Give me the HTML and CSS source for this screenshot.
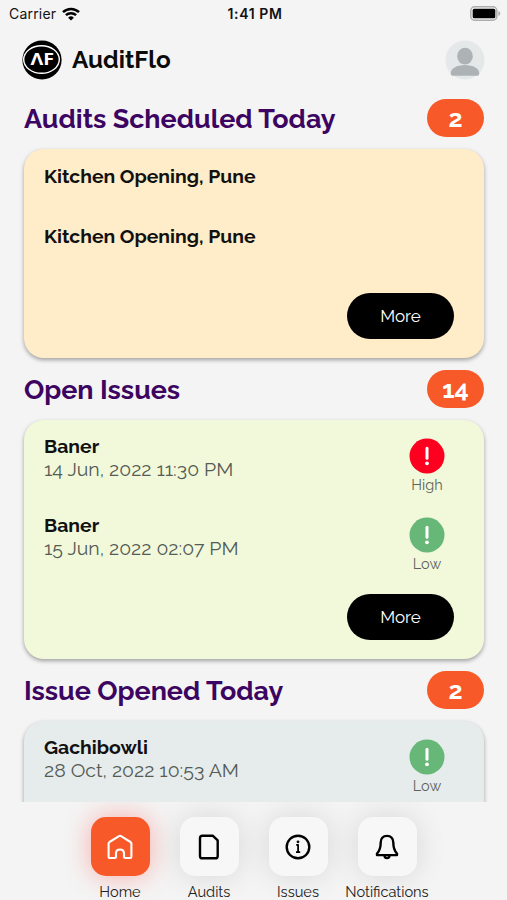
FILE: index.html
```
<!DOCTYPE html>
<html lang="en">
<head>
    <meta charset="UTF-8">
    <meta name="viewport" content="width=device-width, initial-scale=1.0">
    <title>AuditFlo</title>
    <link rel="stylesheet" href="styles.css">
</head>
<body>

    <div class="status-bar">
        <div class="carrier">
            <span>Carrier</span>
            <svg width="18" height="14" viewBox="0 0 18 14" fill="none" stroke="#000" stroke-width="2.5">
                <path d="M1 5.2a11.6 11.6 0 0 1 16 0"/>
                <path d="M3.9 8.2a7.4 7.4 0 0 1 10.2 0"/>
                <path d="M9 13.6L6.1 10.7a4.1 4.1 0 0 1 5.8 0z" fill="#000" stroke="none"/>
            </svg>
        </div>
        <div class="clock">1:41 PM</div>
        <svg class="battery" width="31" height="15" viewBox="0 0 31 15">
            <rect x=".8" y=".8" width="26" height="13.4" rx="3.8" fill="#f4f4f4" stroke="#adadad" stroke-width="1.5"/>
            <rect x="2.7" y="2.7" width="22.6" height="9.6" rx="1.5" fill="#000"/>
            <path d="M28.4 5v5c1.1-.4 1.9-1.3 1.9-2.5S29.5 5.4 28.4 5z" fill="#adadad"/>
        </svg>
    </div>

    <header class="header">
        <svg width="40" height="40" viewBox="0 0 40 40">
            <circle cx="20" cy="20" r="19.6" fill="#000"/>
            <ellipse cx="19.5" cy="19.5" rx="17.8" ry="13.8" fill="none" stroke="#fff" stroke-width="1.4"/>
            <text class="logo-text" x="20.3" y="25.2" text-anchor="middle" textLength="23.5" lengthAdjust="spacingAndGlyphs">ΛF</text>
        </svg>
        <h1>AuditFlo</h1>
        <svg class="avatar" width="40" height="40" viewBox="0 0 40 40">
            <circle cx="20" cy="20" r="19.5" fill="#e4e8e9"/>
            <ellipse cx="20" cy="16.2" rx="7.8" ry="8.4" fill="#adb3b5"/>
            <path d="M5.7 33.5c0-5 6-8.5 14.3-8.5s14.3 3.5 14.3 8.5c0 1.5-1 2.300-2.500 2.300H8.200c-1.500 0-2.500-.8-2.500-2.300z" fill="#adb3b5"/>
        </svg>
    </header>

    <main class="content">
        <div class="section-title">
            <h2>Audits Scheduled Today</h2>
            <span class="count">2</span>
        </div>
        <section class="card card-audits">
            <div class="audit">Kitchen Opening, Pune</div>
            <div class="audit">Kitchen Opening, Pune</div>
            <button class="more">More</button>
        </section>

        <div class="section-title">
            <h2>Open Issues</h2>
            <span class="count">14</span>
        </div>
        <section class="card card-open">
            <div class="issue">
                <div>
                    <div class="place">Baner</div>
                    <div class="date">14 Jun, 2022 11:30 PM</div>
                </div>
                <div class="priority">
                    <svg width="36" height="36" viewBox="0 0 36 36">
                        <circle cx="18" cy="18" r="17.5" fill="#fd0020"/>
                        <path d="M18 10.3v9.9" stroke="#fff" stroke-width="3" stroke-linecap="round"/>
                        <circle cx="18" cy="25.3" r="1.9" fill="#fff"/>
                    </svg>
                    <span>High</span>
                </div>
            </div>
            <div class="issue">
                <div>
                    <div class="place">Baner</div>
                    <div class="date">15 Jun, 2022 02:07 PM</div>
                </div>
                <div class="priority">
                    <svg width="36" height="36" viewBox="0 0 36 36">
                        <circle cx="18" cy="18" r="17.5" fill="#67b779"/>
                        <path d="M18 10.3v9.9" stroke="#fff" stroke-width="3" stroke-linecap="round"/>
                        <circle cx="18" cy="25.3" r="1.9" fill="#fff"/>
                    </svg>
                    <span>Low</span>
                </div>
            </div>
            <button class="more">More</button>
        </section>

        <div class="section-title">
            <h2>Issue Opened Today</h2>
            <span class="count">2</span>
        </div>
        <section class="card card-today">
            <div class="issue">
                <div>
                    <div class="place">Gachibowli</div>
                    <div class="date">28 Oct, 2022 10:53 AM</div>
                </div>
                <div class="priority">
                    <svg width="36" height="36" viewBox="0 0 36 36">
                        <circle cx="18" cy="18" r="17.5" fill="#67b779"/>
                        <path d="M18 10.3v9.9" stroke="#fff" stroke-width="3" stroke-linecap="round"/>
                        <circle cx="18" cy="25.3" r="1.9" fill="#fff"/>
                    </svg>
                    <span>Low</span>
                </div>
            </div>
        </section>
    </main>

    <nav class="tabs">
        <a class="tab active">
            <span class="tab-icon">
                <svg width="30" height="30" viewBox="0 0 30 30">
                    <path d="M3.600 11.600c0-.7.300-1.200.9-1.600L14 4.200c.7-.4 1.300-.4 2 0l9.500 5.800c.6.400.9.900.9 1.600v13.100c0 .8-.5 1.300-1.300 1.300h-4.900c-.8 0-1.200-.4-1.200-1.200v-3.300c0-2.400-1.600-4-4-4s-4 1.600-4 4v3.300c0 .8-.4 1.200-1.200 1.200H4.900c-.8 0-1.300-.5-1.300-1.300z"/>
                </svg>
            </span>
            Home
        </a>
        <a class="tab">
            <span class="tab-icon">
                <svg width="30" height="30" viewBox="0 0 30 30">
                    <path d="M8.400 3.700h10.300l5 4.700v15.500c0 1.600-.8 2.400-2.400 2.400H8.400c-1.600 0-2.400-.8-2.400-2.400V6.100c0-1.600.8-2.400 2.400-2.400z"/>
                </svg>
            </span>
            Audits
        </a>
        <a class="tab">
            <span class="tab-icon">
                <svg width="30" height="30" viewBox="0 0 30 30">
                    <circle cx="15" cy="15" r="11.3"/>
                    <path d="M13.2 12.900h1.900v7.200M13 20.100h4.200" stroke-width="1.800"/>
                    <circle cx="15" cy="9.800" r=".8" stroke-width="1.200"/>
                </svg>
            </span>
            Issues
        </a>
        <a class="tab">
            <span class="tab-icon">
                <svg width="30" height="30" viewBox="0 0 30 30">
                    <path d="M15 3.900c-4.100 0-6.300 2.800-6.300 6.700 0 5.500-.8 8.200-3.700 11v1.500h20v-1.500c-2.900-2.800-3.700-5.500-3.700-11 0-3.900-2.200-6.700-6.300-6.700z"/>
                    <path d="M12.500 23.800c.2 1.400 1.200 2.200 2.500 2.200s2.300-.8 2.500-2.200"/>
                </svg>
            </span>
            Notifications
        </a>
    </nav>

</body>
</html>
```
FILE: styles.css
```
* {
    box-sizing: border-box;
}

body {
    height: 900px;
    margin: 0;
    overflow: hidden;
    display: flex;
    flex-direction: column;
    background-color: #f4f4f4;
    color: #111;
    font-family: Raleway, Lato, sans-serif;
    font-variant-numeric: oldstyle-nums;
}

svg {
    display: block;
    flex: none;
}

h1,
h2 {
    margin: 0;
    font-weight: 700;
    white-space: nowrap;
}

.status-bar {
    height: 27px;
    flex: none;
    padding: 0 6px 0 9px;
    display: grid;
    grid-template-columns: 1fr auto 1fr;
    align-items: center;
    font-family: Inter, sans-serif;
    font-size: 14px;
    font-variant-numeric: normal;
}

.carrier {
    display: flex;
    align-items: center;
    gap: 6px;
    letter-spacing: 0.2px;
}

.clock {
    font-weight: 600;
    letter-spacing: 0.6px;
}

.battery {
    justify-self: end;
}

.header {
    height: 65px;
    flex: none;
    padding: 0 22px;
    display: flex;
    align-items: center;
}

.header h1 {
    margin-left: 10px;
    color: #0b0b0b;
    font-size: 24.3px;
    line-height: 40px;
}

.logo-text {
    fill: #fff;
    font-family: "Open Sans", sans-serif;
    font-size: 15.5px;
    font-weight: 700;
}

.avatar {
    margin-left: auto;
}

.content {
    height: 710px;
    flex: none;
    padding: 7px 23px 0 24px;
    overflow: hidden;
}

.section-title {
    height: 38px;
    display: flex;
    align-items: center;
    justify-content: space-between;
}

.section-title h2 {
    color: #3c0561;
    font-size: 26.9px;
    line-height: 39px;
}

.count {
    width: 57px;
    height: 38px;
    border-radius: 19px;
    background-color: #f85928;
    color: #fff;
    font-size: 25px;
    font-weight: 700;
    line-height: 38px;
    text-align: center;
}

.card {
    margin: 12px 0;
    border-radius: 20px;
    display: flex;
    flex-direction: column;
    box-shadow: 0 2px 4px rgba(0, 0, 0, 0.35);
}

.card-audits {
    height: 209px;
    padding: 15px 30px 19px 20px;
    background-color: #ffecc8;
}

.card-open {
    height: 239px;
    padding: 14px 30px 19px 20px;
    background-color: #f2f9db;
}

.card-today {
    height: 239px;
    padding: 14px 30px 19px 20px;
    background-color: #e6ebec;
}

.audit,
.place {
    font-size: 19.4px;
    font-weight: 700;
    line-height: 25px;
}

.audit {
    height: 60px;
}

.issue {
    height: 79px;
    display: flex;
    justify-content: space-between;
}

.date {
    color: #555b55;
    font-size: 19.5px;
    line-height: 22px;
}

.priority {
    width: 54px;
    padding-top: 4px;
    display: flex;
    flex-direction: column;
    align-items: center;
    color: #5d635d;
    font-size: 14.5px;
    line-height: 21px;
}

.more {
    width: 107px;
    height: 46px;
    margin-top: auto;
    align-self: flex-end;
    padding: 0;
    border: none;
    border-radius: 23px;
    background-color: #000;
    color: #fff;
    font-family: inherit;
    font-size: 17px;
}

.tabs {
    height: 98px;
    flex: none;
    padding-top: 15px;
    display: flex;
    justify-content: center;
    overflow: hidden;
}

.tab {
    width: 89px;
    display: flex;
    flex-direction: column;
    align-items: center;
    gap: 5px;
    color: #222;
    font-size: 14.6px;
    line-height: 22px;
}

.tab-icon {
    width: 59px;
    height: 59px;
    flex: none;
    border-radius: 15px;
    display: flex;
    align-items: center;
    justify-content: center;
    background-color: #f7f7f7;
    box-shadow: 0 0 30px rgba(0, 0, 0, 0.12);
}

.tab-icon svg {
    fill: none;
    stroke: #000;
    stroke-width: 2.4;
    stroke-linejoin: round;
}

.active .tab-icon {
    background-color: #f85928;
    box-shadow: 0 0 26px rgba(255, 60, 50, 0.38);
}

.active .tab-icon svg {
    stroke: #fff;
    stroke-width: 2.1;
}
```
